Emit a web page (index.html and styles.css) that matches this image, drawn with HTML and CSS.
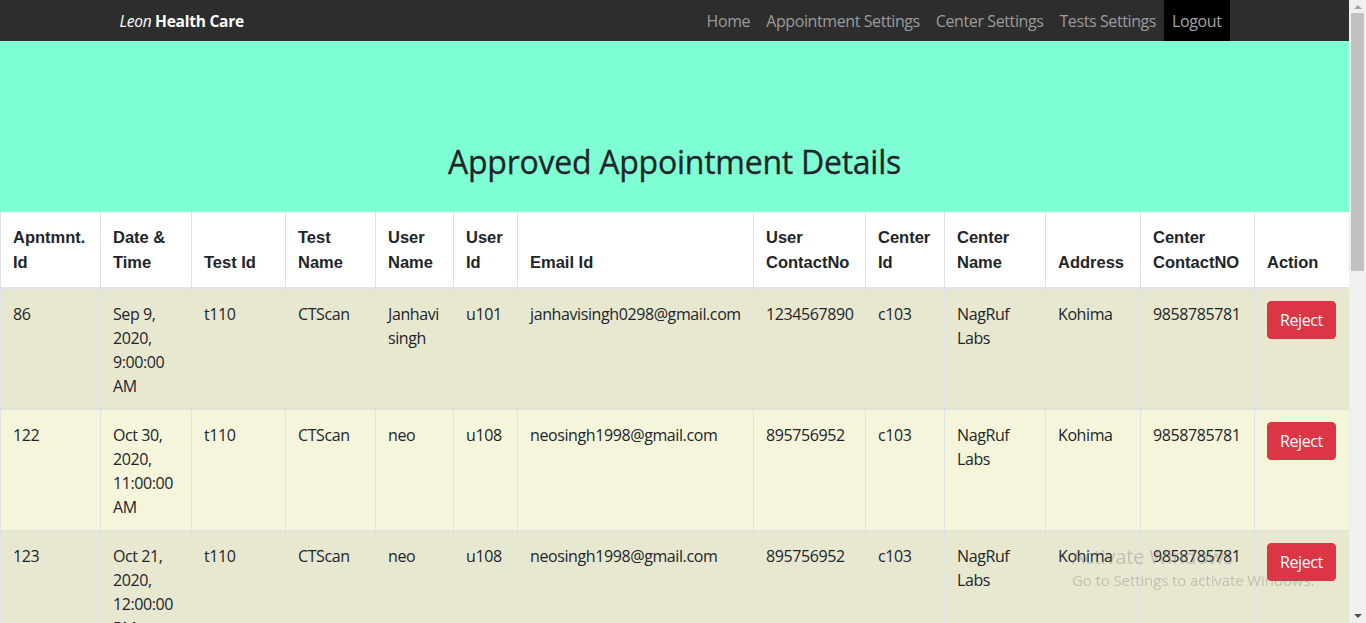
FILE: index.html
```html
<!DOCTYPE html>
<html lang="en">
<head>
<meta charset="utf-8">
<title>Leon Health Care</title>
<link rel="stylesheet" href="styles.css">
</head>
<body>
<div class="page">
  <div class="main">
    <nav class="navbar">
      <div class="container">
        <a class="brand" href="#"><i>Leon</i> <b>Health Care</b></a>
        <ul class="nav">
          <li><a class="nav-link" href="#">Home</a></li>
          <li><a class="nav-link" href="#">Appointment Settings</a></li>
          <li><a class="nav-link" href="#">Center Settings</a></li>
          <li><a class="nav-link" href="#">Tests Settings</a></li>
          <li><a class="nav-link logout" href="#">Logout</a></li>
        </ul>
      </div>
    </nav>
    <header class="banner">
      <h2 class="title">Approved Appointment Details</h2>
    </header>
    <table class="table">
      <colgroup>
        <col class="c1"><col class="c2"><col class="c3"><col class="c4"><col class="c5"><col class="c6"><col class="c7"><col class="c8"><col class="c9"><col class="c10"><col class="c11"><col class="c12"><col class="c13">
      </colgroup>
      <thead>
        <tr>
          <th>Apntmnt. Id</th>
          <th>Date &amp; Time</th>
          <th>Test Id</th>
          <th>Test Name</th>
          <th>User Name</th>
          <th>User Id</th>
          <th>Email Id</th>
          <th>User ContactNo</th>
          <th>Center Id</th>
          <th>Center Name</th>
          <th>Address</th>
          <th>Center ContactNO</th>
          <th>Action</th>
        </tr>
      </thead>
      <tbody>
        <tr>
          <td>86</td>
          <td>Sep 9, 2020, 9:00:00 AM</td>
          <td>t110</td>
          <td>CTScan</td>
          <td>Janhavi singh</td>
          <td>u101</td>
          <td>janhavisingh0298@gmail.com</td>
          <td>1234567890</td>
          <td>c103</td>
          <td>NagRuf Labs</td>
          <td>Kohima</td>
          <td>9858785781</td>
          <td><button class="btn-danger" type="button">Reject</button></td>
        </tr>
        <tr>
          <td>122</td>
          <td>Oct 30, 2020, 11:00:00 AM</td>
          <td>t110</td>
          <td>CTScan</td>
          <td>neo</td>
          <td>u108</td>
          <td>neosingh1998@gmail.com</td>
          <td>895756952</td>
          <td>c103</td>
          <td>NagRuf Labs</td>
          <td>Kohima</td>
          <td>9858785781</td>
          <td><button class="btn-danger" type="button">Reject</button></td>
        </tr>
        <tr>
          <td>123</td>
          <td>Oct 21, 2020, 12:00:00 PM</td>
          <td>t110</td>
          <td>CTScan</td>
          <td>neo</td>
          <td>u108</td>
          <td>neosingh1998@gmail.com</td>
          <td>895756952</td>
          <td>c103</td>
          <td>NagRuf Labs</td>
          <td>Kohima</td>
          <td>9858785781</td>
          <td><button class="btn-danger" type="button">Reject</button></td>
        </tr>
      </tbody>
    </table>
  </div>
  <div class="scrollbar">
    <span class="arrow-up"></span>
    <span class="thumb"></span>
    <span class="spacer"></span>
    <span class="arrow-down"></span>
  </div>
</div>
<div class="watermark">
  <div class="wm-title">Activate Windows</div>
  <div class="wm-sub">Go to Settings to activate Windows.</div>
</div>
</body>
</html>
```
FILE: styles.css
```css
html, body {
  margin: 0;
  padding: 0;
  height: 100%;
  overflow: hidden;
}
body {
  font-family: "Open Sans", "Noto Sans", sans-serif;
  font-size: 16px;
  line-height: 24px;
  color: #212529;
  background: #fff;
}
.page {
  display: flex;
  align-items: flex-start;
  width: 1366px;
}
.main {
  width: 1349px;
  flex: none;
}
.navbar {
  background: #2d2d2d;
  height: 41px;
}
.container {
  width: 1110px;
  margin: 0 auto;
  display: flex;
  align-items: center;
  justify-content: space-between;
  height: 41px;
}
.brand {
  color: #fff;
  text-decoration: none;
  font-size: 15.5px;
  letter-spacing: -0.25px;
}
.brand i { font-weight: 400; }
.brand b { font-weight: 700; }
.nav {
  list-style: none;
  display: flex;
  margin: 0;
  padding: 0;
  height: 41px;
}
.nav li { display: flex; }
.nav-link {
  display: flex;
  align-items: center;
  padding: 0 8px;
  color: #9b9b9b;
  text-decoration: none;
  font-size: 16px;
  letter-spacing: -0.4px;
}
.logout {
  background: #000;
  color: #a4a4a4;
}
.banner {
  background: #7fffd4;
  padding: 102px 0 31px;
  text-align: center;
}
.title {
  margin: 0;
  font-size: 32px;
  line-height: 38px;
  font-weight: 500;
  color: #212529;
  letter-spacing: -0.25px;
  -webkit-text-stroke: 0.3px #212529;
}
.table {
  width: 1349px;
  border-collapse: collapse;
  table-layout: fixed;
  background: #f5f5dc;
}
.c1 { width: 100px; }
.c2 { width: 91px; }
.c3 { width: 94px; }
.c4 { width: 90px; }
.c5 { width: 78px; }
.c6 { width: 64px; }
.c7 { width: 236px; }
.c8 { width: 112px; }
.c9 { width: 79px; }
.c10 { width: 101px; }
.c11 { width: 95px; }
.c12 { width: 114px; }
.c13 { width: 95px; }
.table th, .table td {
  border: 1px solid #dee2e6;
  padding: 12px;
  text-align: left;
}
.table th {
  background: #fff;
  font-family: "Liberation Sans", Arial, sans-serif;
  font-weight: 700;
  font-size: 16.5px;
  line-height: 25px;
  padding-top: 13px;
  vertical-align: bottom;
  border-bottom: 2px solid #dee2e6;
  border-top: 0;
}
.table td {
  vertical-align: top;
  letter-spacing: -0.4px;
  padding-top: 13px;
  padding-bottom: 11px;
}
.table tbody tr:nth-child(odd) td {
  background: #e8e8d1;
}
.btn-danger {
  font-family: inherit;
  font-size: 16px;
  line-height: 24px;
  color: #fff;
  background: #dc3545;
  border: 1px solid #dc3545;
  border-radius: 4px;
  padding: 6px 12px;
  margin-top: -1px;
  letter-spacing: -0.4px;
  cursor: pointer;
}
.scrollbar {
  width: 17px;
  height: 623px;
  flex: none;
  background: #f0f0f0;
  display: flex;
  flex-direction: column;
  align-items: center;
}
.arrow-up {
  margin-top: 5px;
  width: 0;
  height: 0;
  border-left: 4px solid transparent;
  border-right: 4px solid transparent;
  border-bottom: 4px solid #a3a3a3;
}
.thumb {
  margin-top: 4px;
  width: 13px;
  height: 258px;
  background: #c1c1c1;
}
.spacer { flex: 1; }
.arrow-down {
  margin-bottom: 5px;
  width: 0;
  height: 0;
  border-left: 4px solid transparent;
  border-right: 4px solid transparent;
  border-top: 4px solid #505050;
}
.watermark {
  position: fixed;
  left: 1072px;
  top: 544px;
  color: rgba(120, 120, 120, 0.35);
  pointer-events: none;
}
.wm-title {
  font-size: 20px;
  line-height: 26px;
  letter-spacing: -0.2px;
}
.wm-sub {
  font-size: 15px;
  line-height: 20px;
  letter-spacing: -0.1px;
}
```
